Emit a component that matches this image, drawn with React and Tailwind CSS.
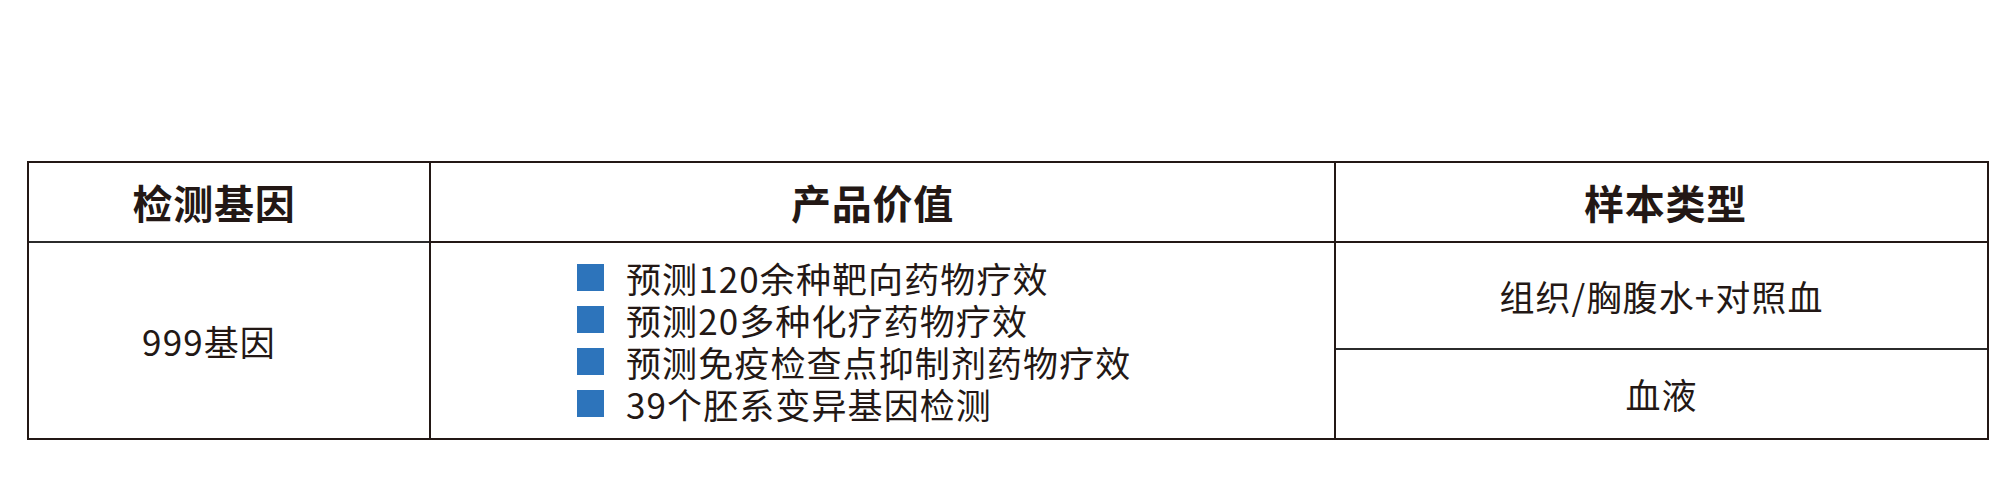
const ink = 'text-[#231815]';

const values = [
  '预测120余种靶向药物疗效',
  '预测20多种化疗药物疗效',
  '预测免疫检查点抑制剂药物疗效',
  '39个胚系变异基因检测',
];

export default function App() {
  return (
    <div className="w-[2015px] h-[477px] bg-white pt-[161px] pl-[27px] font-['Noto_Sans_CJK_SC','Noto_Sans',sans-serif]">
      <div className={`w-[1962px] border-2 border-[#231815] grid grid-cols-[400px_905px_1fr] ${ink}`}>
        {/* header row */}
        <div className="h-[78px] flex items-center justify-center pr-[30px] text-[40px] leading-[48px] font-bold tracking-[0.7px]">
          检测基因
        </div>
        <div className="h-[78px] border-l-2 border-[#231815] flex items-center justify-center pr-[20px] text-[40px] leading-[48px] font-bold tracking-[0.7px]">
          产品价值
        </div>
        <div className="h-[78px] border-l-2 border-[#231815] flex items-center justify-center pl-[8px] text-[40px] leading-[48px] font-bold tracking-[0.7px]">
          样本类型
        </div>

        {/* body row */}
        <div className="h-[197px] border-t-2 border-[#2b2b2b] flex items-center justify-center pr-[40px] text-[35px] leading-[42px] tracking-[1.1px]">
          999基因
        </div>
        <div className="h-[197px] border-t-2 border-l-2 border-[#231815] flex items-center pl-[146px]">
          <ul className="flex flex-col">
            {values.map((v) => (
              <li key={v} className="flex items-center h-[42px] text-[35px] leading-[42px] tracking-[1.1px]">
                <span className="w-[27px] h-[27px] bg-[#2d74bb] mr-[22px] shrink-0" />
                {v}
              </li>
            ))}
          </ul>
        </div>
        <div className="h-[197px] border-t-2 border-l-2 border-[#231815] flex flex-col text-[35px] leading-[42px] tracking-[1.1px]">
          <div className="h-[105px] flex items-center justify-center">组织/胸腹水+对照血</div>
          <div className="flex-1 border-t-2 border-[#2b2b2b] flex items-center justify-center">血液</div>
        </div>
      </div>
    </div>
  );
}
